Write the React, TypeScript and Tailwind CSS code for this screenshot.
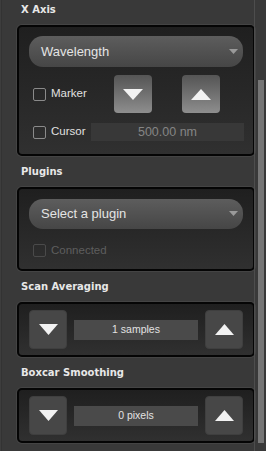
import React from "react";

const Header = ({ children, first }: { children: React.ReactNode; first?: boolean }) => (
  <div
    className={
      first
        ? "h-[25px] pl-[21px] pt-[3px] text-[10px] leading-[14px] font-bold text-[#e8e8e8]"
        : "h-[31px] pl-[21px] flex items-center text-[10px] font-bold text-[#e8e8e8]"
    }
    style={{ fontFamily: '"DejaVu Sans", Verdana, sans-serif' }}
  >
    {children}
  </div>
);

const Panel = ({ children, className }: { children: React.ReactNode; className?: string }) => (
  <div
    className={
      "ml-[17px] w-[238px] rounded-[5px] border-[2px] border-[#050505] bg-gradient-to-b from-[#1f1f1f] to-[#303030] shadow-[0_0_0_1px_#444] " +
      (className ?? "")
    }
  >
    {children}
  </div>
);

const Dropdown = ({ label, h }: { label: string; h: string }) => (
  <div
    className={
      "mx-[10px] flex items-center justify-between rounded-[14px] bg-gradient-to-b from-[#5d5d5d] to-[#464646] pl-[12px] pr-[5px] text-[13px] text-[#e4e4e4] " +
      h
    }
  >
    <span>{label}</span>
    <svg width="9" height="6" viewBox="0 0 9 6">
      <path d="M0 0 L9 0 L4.5 5 Z" fill="#9a9a9a" />
    </svg>
  </div>
);

const Check = ({ label, disabled }: { label: string; disabled?: boolean }) => (
  <div className="flex items-center">
    <div
      className={
        "w-[13px] h-[13px] rounded-[2px] border " + (disabled ? "border-[#4a4a4a]" : "border-[#8a8a8a]")
      }
    />
    <span className={"ml-[5px] text-[11.5px] " + (disabled ? "text-[#5e5e5e]" : "text-[#e0e0e0]")}>{label}</span>
  </div>
);

const Tri = ({ up, w = 20, h = 11 }: { up?: boolean; w?: number; h?: number }) => (
  <svg width={w} height={h} viewBox={`0 0 ${w} ${h}`}>
    <path d={up ? `M0 ${h} L${w} ${h} L${w / 2} 0 Z` : `M0 0 L${w} 0 L${w / 2} ${h} Z`} fill="#f2f2f2" />
  </svg>
);

const GradBtn = ({ up }: { up?: boolean }) => (
  <div className="w-[38px] h-[38px] rounded-[4px] bg-gradient-to-b from-[#555555] to-[#8e8e8e] flex items-center justify-center">
    <Tri up={up} />
  </div>
);

const FlatBtn = ({ up }: { up?: boolean }) => (
  <div className="w-[38px] h-[39px] rounded-[4px] bg-[#474747] border border-[#3f3f3f] flex items-center justify-center">
    <Tri up={up} w={19} h={11} />
  </div>
);

const Stepper = ({ value }: { value: string }) => (
  <Panel className="h-[55px] pt-[6px]">
    <div className="flex items-start pl-[10px]">
      <FlatBtn />
      <div className="ml-[7px] mt-[10px] w-[124px] h-[20px] bg-[#4a4a4a] flex items-center justify-center text-[10.5px] text-[#e2e2e2]">
        {value}
      </div>
      <div className="ml-[7px]">
        <FlatBtn up />
      </div>
    </div>
  </Panel>
);

export default function App() {
  return (
    <div
      className="w-[266px] h-[451px] bg-[#393939] flex overflow-hidden"
      style={{ fontFamily: '"Liberation Sans", Arial, sans-serif' }}
    >
      <div className="w-[2px] h-full bg-[#3d3d3d] border-r border-[#333]" />
      <div className="w-[253px] -ml-[2px] flex flex-col">
        <Header first>X Axis</Header>
        <Panel className="h-[131px] pt-[9px]">
          <Dropdown label="Wavelength" h="h-[31px]" />
          <div className="flex items-center mt-[8px] h-[38px] pl-[14px]">
            <div className="w-[81px]">
              <Check label="Marker" />
            </div>
            <GradBtn />
            <div className="ml-[30px]">
              <GradBtn up />
            </div>
          </div>
          <div className="flex items-center mt-[10px] h-[18px] pl-[14px]">
            <div className="w-[58px]">
              <Check label="Cursor" />
            </div>
            <div className="w-[153px] h-[18px] bg-[#383838] flex items-center justify-center text-[12.5px] text-[#858585]">
              500.00 nm
            </div>
          </div>
        </Panel>
        <Header>Plugins</Header>
        <Panel className="h-[84px] pt-[10px]">
          <Dropdown label="Select a plugin" h="h-[30px]" />
          <div className="mt-[13px] pl-[14px]">
            <Check label="Connected" disabled />
          </div>
        </Panel>
        <Header>Scan Averaging</Header>
        <Stepper value="1 samples" />
        <Header>Boxcar Smoothing</Header>
        <Stepper value="0 pixels" />
      </div>
      <div className="w-[1px] h-full bg-[#4d4d4d] ml-[1px]" />
      <div className="w-[10px] h-full flex flex-col">
        <div className="h-[80px]" />
        <div className="ml-[3px] w-[6px] h-[363px] bg-[#767676]" />
      </div>
    </div>
  );
}
